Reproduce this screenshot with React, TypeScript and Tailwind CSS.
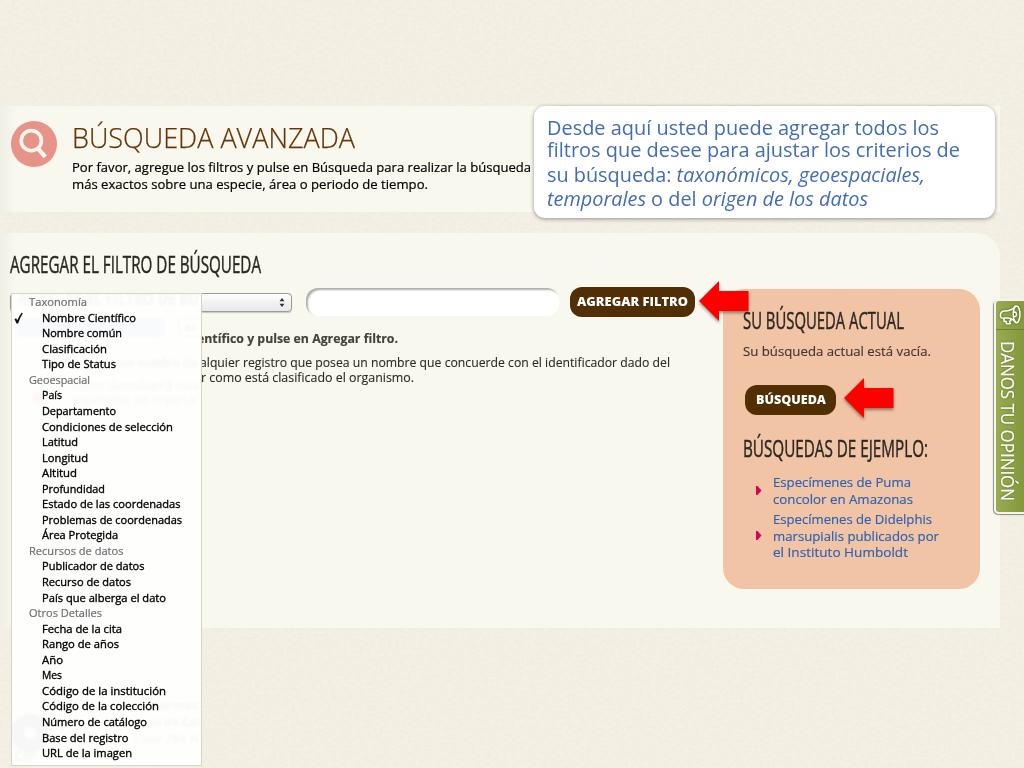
import { useLayoutEffect, useRef, type ReactNode } from "react";

/** Single line of text stretched or condensed horizontally to a given width. */
function Fit({ w, children, className = "" }: { w: number; children: ReactNode; className?: string }) {
  const ref = useRef<HTMLSpanElement>(null);
  useLayoutEffect(() => {
    const el = ref.current;
    if (!el) return;
    el.style.transform = "none";
    const natural = parseFloat(getComputedStyle(el).width);
    el.style.transform = natural ? `scaleX(${w / natural})` : "none";
  }, [w]);
  return (
    <span className="block h-full" style={{ width: w }}>
      <span ref={ref} className={`inline-block origin-left align-top whitespace-nowrap ${className}`}>
        {children}
      </span>
    </span>
  );
}

type Row = [string, number];
const groups: { label: Row; items: Row[] }[] = [
  {
    label: ["Taxonomía", 58],
    items: [["Nombre Científico", 94], ["Nombre común", 80], ["Clasificación", 65], ["Tipo de Status", 74]],
  },
  {
    label: ["Geoespacial", 61],
    items: [
      ["País", 20], ["Departamento", 74], ["Condiciones de selección", 131], ["Latitud", 36], ["Longitud", 46],
      ["Altitud", 35], ["Profundidad", 63], ["Estado de las coordenadas", 138.5],
      ["Problemas de coordenadas", 140], ["Área Protegida", 76],
    ],
  },
  {
    label: ["Recursos de datos", 94.5],
    items: [["Publicador de datos", 102.5], ["Recurso de datos", 89], ["País que alberga el dato", 124]],
  },
  {
    label: ["Otros Detalles", 73],
    items: [
      ["Fecha de la cita", 80], ["Rango de años", 77], ["Año", 21], ["Mes", 20],
      ["Código de la institución", 124], ["Código de la colección", 117], ["Número de catálogo", 105],
      ["Base del registro", 86.5], ["URL de la imagen", 90],
    ],
  },
];

function Paper() {
  return (
    <svg className="absolute inset-0 h-full w-full opacity-[0.12]" aria-hidden="true">
      <filter id="paper">
        <feTurbulence type="fractalNoise" baseFrequency="0.25 0.35" numOctaves="3" seed="4" />
        <feColorMatrix values="0 0 0 0 0.62  0 0 0 0 0.54  0 0 0 0 0.4  1.6 0 0 0 -0.55" />
      </filter>
      <rect width="100%" height="100%" filter="url(#paper)" />
    </svg>
  );
}

function Arrow({ className }: { className: string }) {
  return (
    <svg className={`absolute drop-shadow-[0_2px_1.5px_rgba(0,0,0,0.4)] ${className}`} width="50" height="40" viewBox="0 0 50 40">
      <path d="M0 20 20 0v10h29.5v20H20v10z" fill="#fe0000" />
    </svg>
  );
}

function Menu() {
  return (
    <div className="absolute top-[293px] left-[11px] h-[473px] w-[191px] overflow-hidden border border-[#d9d5c6] bg-[#fefefd] text-[11px] leading-[15.55px] font-medium text-black">
      <div className="absolute inset-0 whitespace-nowrap text-[#f6f6f4] blur-[0.8px]" aria-hidden="true">
        <div className="absolute top-[-5px] left-[6px] text-[17px] leading-[20px] font-bold">
          <Fit w={181}>AGREGAR EL FILTRO DE BÚ</Fit>
        </div>
        <div className="absolute top-[24px] left-[5px] h-[19px] w-[148px] rounded bg-[#f9fafc]" />
        <div className="absolute top-[24px] left-[166px] h-[19px] w-[30px] rounded border border-[#f8f8f8] pl-[6px] font-bold">es</div>
        <div className="absolute top-[61px] left-[108px] text-[12.5px] font-bold">
          <Fit w={78}>un nombre cie</Fit>
        </div>
        <div className="absolute top-[84px] left-[60px] text-[12.5px]">
          <Fit w={128}>filtro devolverá cua</Fit>
        </div>
        <div className="absolute top-[98px] left-[60px] text-[12.5px]">
          <Fit w={127}>organismo, sin importar</Fit>
        </div>
        <div className="absolute top-[98px] left-[20px] size-3 rounded-full bg-[#fef7f6]" />
        <div className="absolute top-[420px] left-[-1px] size-[38px] rounded-full border-[13px] border-[#f7f7f7]" />
        <div className="absolute top-[403px] left-[142px] font-bold"><Fit w={45}>formac</Fit></div>
        <div className="absolute top-[420px] left-[136px] font-bold"><Fit w={51}>ad de Cal</Fit></div>
        <div className="absolute top-[437px] left-[122px]"><Fit w={65}>Calle 28A N</Fit></div>
        <div className="absolute top-[454px] left-[2px] text-[14px] font-bold">CIP</div>
      </div>
      <svg className="absolute top-[18px] left-[2px]" width="9" height="13" viewBox="0 0 9 13">
        <path d="M.4 7.300 2.100 6.200l1.200 2.100Q5 4 7.600.7L8.900 1.200Q5.700 6 4.100 11.500H2.500Q1.900 9.500.4 7.300z" fill="#111" />
      </svg>
      <div className="relative mt-[0.2px]">
        {groups.map((g) => (
          <div key={g.label[0]}>
            <div className="h-[15.55px] pl-[17px] text-[#6f6f72] [-webkit-text-stroke:0.2px_#6f6f72]"><Fit w={g.label[1]}>{g.label[0]}</Fit></div>
            {g.items.map(([t, w]) => (
              <div key={t} className="h-[15.55px] pl-[30px] [-webkit-text-stroke:0.35px_#000]"><Fit w={w}>{t}</Fit></div>
            ))}
          </div>
        ))}
      </div>
    </div>
  );
}

function Bullet() {
  return (
    <svg width="6" height="9" viewBox="0 0 6 9" className="shrink-0">
      <path d="M0 0h1.5L5.5 4.5 1.5 9H0z" fill="#d0075a" />
    </svg>
  );
}

const heading = "text-[23px] leading-[28px] h-[28px] text-[#2b2822] [-webkit-text-stroke:0.45px_#2b2822]";

export default function App() {
  return (
    <div className="relative h-[768px] w-[1024px] overflow-hidden bg-[#f4f0e5] pt-[106px] font-['Open_Sans','Noto_Sans',sans-serif]">
      <Paper />
      <header className="relative flex h-[106px] w-[1000px] gap-[15px] bg-linear-to-r from-[#efefe6] to-[#f8f8ef] to-[16px] pt-[15px] pl-[11px]">
        <svg width="46" height="46" viewBox="0 0 46 46" className="shrink-0">
          <circle cx="23" cy="23" r="23" fill="#e69388" />
          <circle cx="20.3" cy="19.7" r="10.1" fill="none" stroke="#fbf7ef" strokeWidth="3.6" />
          <path d="m27 27.5 7.3 8.3" stroke="#fbf7ef" strokeWidth="4.2" />
        </svg>
        <div>
          <h1 className="h-[32px] text-[28px] leading-[32px] font-light text-[#673306] [-webkit-text-stroke:0.25px_#673306]"><Fit w={283}>BÚSQUEDA AVANZADA</Fit></h1>
          <div className="mt-[6px] text-[13px] leading-[16.5px] text-black [-webkit-text-stroke:0.2px_#000]">
            <div className="h-[16.5px]"><Fit w={459}>Por favor, agregue los filtros y pulse en Búsqueda para realizar la búsqueda</Fit></div>
            <div className="h-[16.5px]"><Fit w={356}>más exactos sobre una especie, área o periodo de tiempo.</Fit></div>
          </div>
        </div>
      </header>

      <main className="relative mt-[21px] flex h-[395px] w-[1000px] rounded-tr-[24px] bg-linear-to-r from-[#efefe6] to-[#f8f8ef] to-[16px]">
        <section className="w-[723px] shrink-0 pt-[17px] pl-[10px]">
          <h2 className={heading}><Fit w={251}>AGREGAR EL FILTRO DE BÚSQUEDA</Fit></h2>
          <div className="mt-[9px] flex h-[30px]">
            <div className="mt-[6px] flex h-[19px] w-[282px] items-center justify-end rounded-[4px] border border-[#9c9c98] bg-linear-to-b from-white via-[#f2f2f2] to-[#e9e9e9] pr-[6px] shadow-[0_1px_1px_rgba(0,0,0,0.2)]">
              <svg width="6" height="9" viewBox="0 0 6 9"><path d="M3 0 5.5 3.3h-5zM3 9 .5 5.7h5z" fill="#333" /></svg>
            </div>
            <div className="mt-px ml-[14px] h-[28px] w-[253px] rounded-[12px] bg-white shadow-[inset_2px_2px_2px_rgba(0,0,0,0.32)]" />
            <button className="ml-[11px] h-[30px] w-[125px] rounded-[12px] bg-[#522e05] pl-[7px] text-left text-[13px] leading-[29px] font-extrabold text-white">
              <Fit w={111}>AGREGAR FILTRO</Fit>
            </button>
          </div>
          <div className="mt-[14px] pl-[187px] text-[12.5px] leading-[15px] text-[#2c2a26] [-webkit-text-stroke:0.12px_#2c2a26]">
            <div className="h-[15px] font-bold text-[#46423a]"><Fit w={201}>entífico y pulse en Agregar filtro.</Fit></div>
            <div className="mt-[9px] ml-[3px] h-[15px]"><Fit w={470}>alquier registro que posea un nombre que concuerde con el identificador dado del</Fit></div>
            <div className="ml-[4px] h-[15px]"><Fit w={213}>r como está clasificado el organismo.</Fit></div>
          </div>
        </section>

        <aside className="mt-[56px] h-[300px] w-[257px] rounded-[21px] bg-[#f1c4a5] pt-[17px] pl-[20px] text-[13px] text-[#40372f]">
          <h2 className={heading}><Fit w={161}>SU BÚSQUEDA ACTUAL</Fit></h2>
          <p className="mt-[8.5px] h-[17px] leading-[17px] [-webkit-text-stroke:0.15px_#40372f]"><Fit w={188}>Su búsqueda actual está vacía.</Fit></p>
          <button className="mt-[25.5px] ml-[2px] block h-[30px] w-[91px] rounded-[12px] bg-[#522e05] pl-[11px] text-left text-[13px] leading-[29px] font-extrabold text-white">
            <Fit w={70}>BÚSQUEDA</Fit>
          </button>
          <h2 className={`mt-[19px] ${heading}`}><Fit w={185}>BÚSQUEDAS DE EJEMPLO:</Fit></h2>
          <ul className="mt-[12px] flex flex-col gap-[4px] pl-[13px] leading-[16.5px] text-[#2a60b4] [-webkit-text-stroke:0.15px_#2a60b4]">
            <li className="flex items-center gap-[11px]">
              <Bullet />
              <a>
                <span className="block h-[16.5px]"><Fit w={138}>Especímenes de Puma</Fit></span>
                <span className="block h-[16.5px]"><Fit w={140}>concolor en Amazonas</Fit></span>
              </a>
            </li>
            <li className="flex items-center gap-[11px]">
              <Bullet />
              <a>
                <span className="block h-[16.5px]"><Fit w={159}>Especímenes de Didelphis</Fit></span>
                <span className="block h-[16.5px]"><Fit w={166}>marsupialis publicados por</Fit></span>
                <span className="block h-[16.5px]"><Fit w={135}>el Instituto Humboldt</Fit></span>
              </a>
            </li>
          </ul>
        </aside>
      </main>

      <Menu />

      <div className="absolute top-[106px] left-[534px] h-[112px] w-[461px] rounded-[11px] bg-white pt-[11px] pl-[13px] text-[19.5px] text-[#426db5] shadow-[0_1px_4px_rgba(0,0,0,0.4)]">
        <div className="h-[22px] leading-[22px]"><Fit w={392}>Desde aquí usted puede agregar todos los</Fit></div>
        <div className="h-[24px] leading-[22px]"><Fit w={413}>filtros que desee para ajustar los criterios de</Fit></div>
        <div className="h-[24px] leading-[24px]"><Fit w={378}>su búsqueda: <i>taxonómicos, geoespaciales,</i></Fit></div>
        <div className="h-[24px] leading-[24px]"><Fit w={321}><i>temporales</i> o del <i>origen de los datos</i></Fit></div>
      </div>

      <Arrow className="top-[281px] left-[699px]" />
      <Arrow className="top-[378px] left-[844px]" />

      <div className="absolute top-[299px] left-[994px] h-[215px] w-[34px] rounded-l-[5px] border-2 border-[#f4f5ec] bg-linear-to-r from-[#9aab50] to-[#82963b] shadow-[-1px_1px_1px_rgba(60,60,50,0.55)]">
        <div className="flex h-[29px] justify-center border-b border-[#6e802f] pt-[3px] pr-[3px]">
          <svg width="22" height="22" viewBox="0 0 22 22" fill="none" stroke="#fff" strokeWidth="1.5" strokeLinejoin="round" strokeLinecap="round" className="drop-shadow-[0_0_0.8px_#4c5a1c]">
            <path d="M16.500 2C14 5.500 10 7 5.500 7 1.500 7 .3 12 2.500 13.800c2 1 5-.3 7 .2 3 .6 5.500 2 7.500 4.500" />
            <ellipse cx="17.600" cy="10.300" rx="3.400" ry="8.400" />
            <path d="M5 14.500v3h2.300v2.200h4l-.8-2.600 1.500-.5-.5-2" />
            <path d="M15.300 8.200c3-.8 3 5 0 4.300" />
          </svg>
        </div>
        <div className="mt-[10.5px] ml-[3px] h-[160px] w-[18px]">
          <div className="h-[18px] w-[160px] origin-top-left translate-x-[18px] rotate-90 text-[17.5px] leading-[18px] text-white [text-shadow:0_0_2px_#4c5a1c] [-webkit-text-stroke:0.2px_#fff]">
            <Fit w={160}>DANOS TU OPINIÓN</Fit>
          </div>
        </div>
      </div>
    </div>
  );
}
